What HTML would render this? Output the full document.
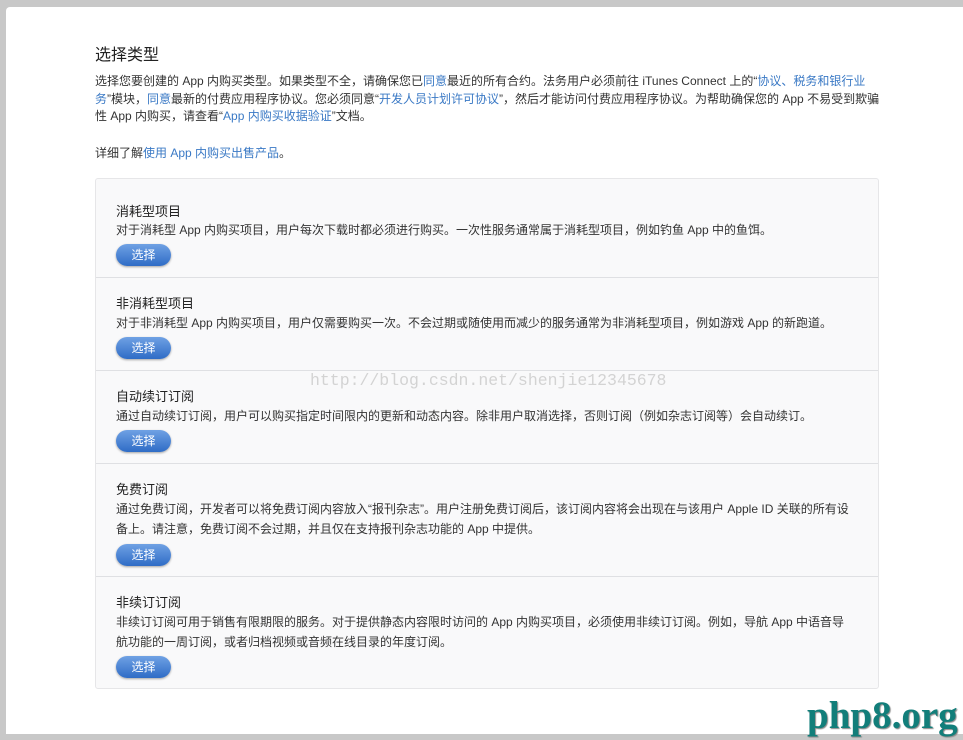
<!DOCTYPE html>
<html><head><meta charset="utf-8"><style>
body{margin:0;width:963px;height:740px;background:#c8c8c8;position:relative;overflow:hidden;font-family:"Liberation Sans","Noto Sans CJK SC",sans-serif;color:#333}
.panel{position:absolute;left:6px;top:7px;width:957px;height:727px;background:#fff;border-radius:4px 0 0 0}
.c{position:absolute;left:89px;top:0;width:785px}
h1{position:absolute;left:0;top:34px;margin:0;font-size:16px;font-weight:normal;color:#222}
.p{position:absolute;left:0;font-size:12px;line-height:17.5px;width:785px}
a{color:#3a79c5;text-decoration:none}
.box{position:absolute;left:0;top:171px;width:782px;height:509px;background:#f9f9fa;border:1px solid #e6e6e8;border-radius:3px}
.s{position:absolute;left:0;width:782px;border-top:1px solid #dfe0e3}
.s:first-child{border-top:none}
.t{position:absolute;left:20px;font-size:13px;color:#222}
.d{position:absolute;left:20px;font-size:12px;line-height:20px;width:732px}
.b{position:absolute;left:20px;width:55px;height:22px;border-radius:11px;background:linear-gradient(#6fa1e4,#2f6cc6);box-shadow:0 1px 2px rgba(0,0,0,.35);color:#fff;font-size:12px;text-align:center;line-height:22px}
.wm{position:absolute;left:310px;top:371px;font-family:"Liberation Mono",monospace;font-size:16.5px;color:#d3d3d3}
.logo{position:absolute;left:807px;top:693px;font-family:"Liberation Serif",serif;font-weight:bold;font-size:39px;color:#127e7a;text-shadow:1px 1px 1px #888}
</style></head><body>
<div class="panel"><div class="c">
<h1>选择类型</h1>
<div class="p" style="top:66px">选择您要创建的 App 内购买类型。如果类型不全，请确保您已<a>同意</a>最近的所有合约。法务用户必须前往 iTunes Connect 上的“<a>协议、税务和银行业务</a>”模块，<a>同意</a>最新的付费应用程序协议。您必须同意“<a>开发人员计划许可协议</a>”，然后才能访问付费应用程序协议。为帮助确保您的 App 不易受到欺骗性 App 内购买，请查看“<a>App 内购买收据验证</a>”文档。</div>
<div class="p" style="top:138px">详细了解<a>使用 App 内购买出售产品</a>。</div>
<div class="box">
<div class="s" style="top:0;height:98px"><div class="t" style="top:22px">消耗型项目</div><div class="d" style="top:41px">对于消耗型 App 内购买项目，用户每次下载时都必须进行购买。一次性服务通常属于消耗型项目，例如钓鱼 App 中的鱼饵。</div><div class="b" style="top:65px">选择</div></div>
<div class="s" style="top:98px;height:92px"><div class="t" style="top:15px">非消耗型项目</div><div class="d" style="top:35px">对于非消耗型 App 内购买项目，用户仅需要购买一次。不会过期或随使用而减少的服务通常为非消耗型项目，例如游戏 App 的新跑道。</div><div class="b" style="top:59px">选择</div></div>
<div class="s" style="top:191px;height:92px"><div class="t" style="top:15px">自动续订订阅</div><div class="d" style="top:35px">通过自动续订订阅，用户可以购买指定时间限内的更新和动态内容。除非用户取消选择，否则订阅（例如杂志订阅等）会自动续订。</div><div class="b" style="top:59px">选择</div></div>
<div class="s" style="top:284px;height:112px"><div class="t" style="top:15px">免费订阅</div><div class="d" style="top:35px;width:742px">通过免费订阅，开发者可以将免费订阅内容放入“报刊杂志”。用户注册免费订阅后，该订阅内容将会出现在与该用户 Apple ID 关联的所有设备上。请注意，免费订阅不会过期，并且仅在支持报刊杂志功能的 App 中提供。</div><div class="b" style="top:80px">选择</div></div>
<div class="s" style="top:397px;height:110px"><div class="t" style="top:15px">非续订订阅</div><div class="d" style="top:35px">非续订订阅可用于销售有限期限的服务。对于提供静态内容限时访问的 App 内购买项目，必须使用非续订订阅。例如，导航 App 中语音导航功能的一周订阅，或者归档视频或音频在线目录的年度订阅。</div><div class="b" style="top:79px">选择</div></div>
</div>
</div></div>
<div class="wm">http://blog.csdn.net/shenjie12345678</div>
<div class="logo">php8.org</div>
</body></html>
